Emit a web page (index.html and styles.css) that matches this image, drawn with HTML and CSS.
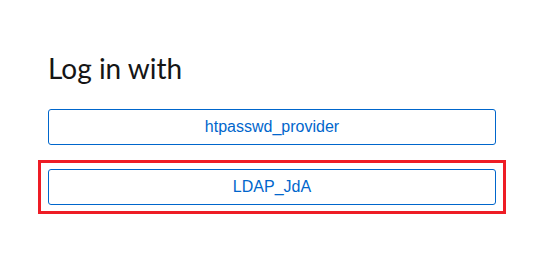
FILE: index.html
```html
<!DOCTYPE html>
<html>
<head>
<meta charset="utf-8">
<link rel="stylesheet" href="styles.css">
</head>
<body>
<main class="login">
  <h1 class="title">Log in with</h1>
  <ul class="providers">
    <li><a class="provider" href="#">htpasswd_provider</a></li>
    <li class="highlight"><a class="provider" href="#">LDAP_JdA</a></li>
  </ul>
</main>
</body>
</html>
```
FILE: styles.css
```css
html, body {
  margin: 0;
  padding: 0;
  background: #ffffff;
}
.login {
  padding: 48px 46px 40px 48px;
}
.title {
  margin: 0;
  font-family: "Lato", "Open Sans", sans-serif;
  font-weight: 400;
  font-size: 28px;
  line-height: 40px;
  color: #151515;
}
.providers {
  list-style: none;
  margin: 21px 0 0 0;
  padding: 0;
  display: flex;
  flex-direction: column;
  gap: 24px;
}
.highlight {
  margin: -9px -10px;
  padding: 6px 7px;
  border: 3px solid #ee1c25;
}
.provider {
  display: flex;
  align-items: center;
  justify-content: center;
  height: 36px;
  box-sizing: border-box;
  border: 1px solid #0066cc;
  border-radius: 3px;
  color: #0066cc;
  text-decoration: none;
  font-family: "Liberation Sans", Arial, sans-serif;
  font-size: 16px;
}
```
